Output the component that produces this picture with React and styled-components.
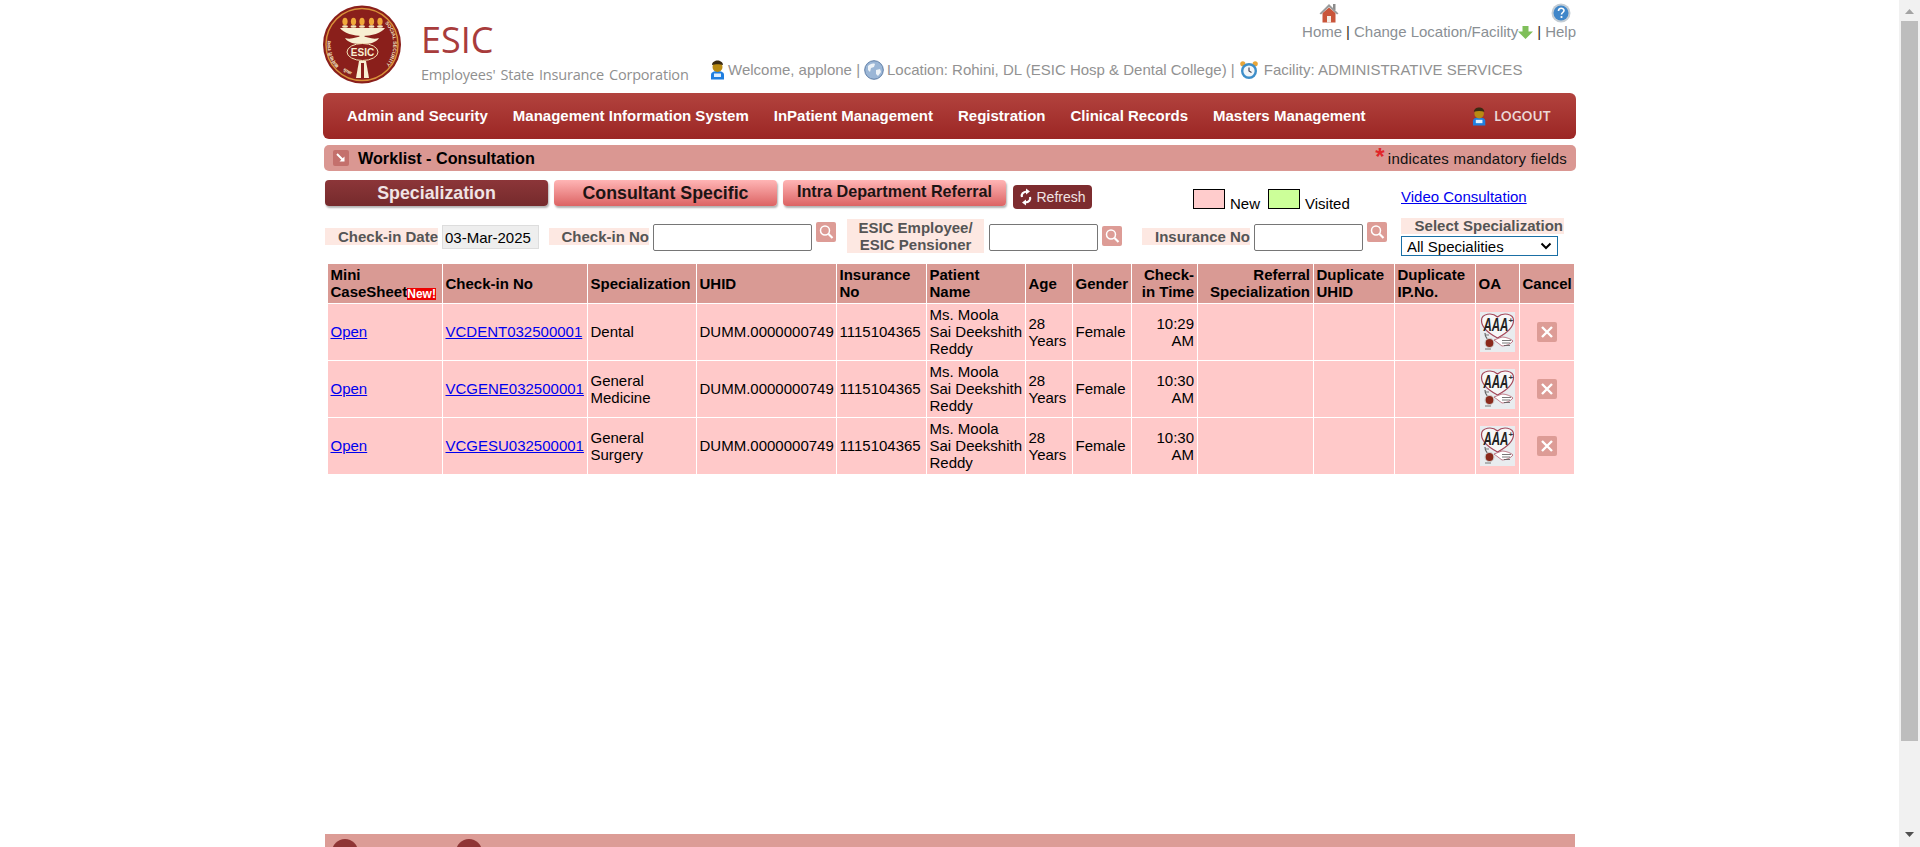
import React from 'react';
import styled, { createGlobalStyle } from 'styled-components';

const GlobalStyle = createGlobalStyle`
  html, body { margin: 0; padding: 0; height: 100%; overflow: hidden; background: #fff; }
  body { font-family: "Liberation Sans", Arial, sans-serif; font-size: 15px; color: #000; }
`;

const rows = [
  { no: 'VCDENT032500001', spec: 'Dental', time: '10:29 AM' },
  { no: 'VCGENE032500001', spec: 'General Medicine', time: '10:30 AM' },
  { no: 'VCGESU032500001', spec: 'General Surgery', time: '10:30 AM' },
];
const colWidths = [114, 144, 108, 139, 89, 98, 46, 58, 65, 115, 80, 80, 43, 54];
const menuItems = ['Admin and Security', 'Management Information System', 'InPatient Management', 'Registration', 'Clinical Records', 'Masters Management'];

const UserIcon = ({ size = 20 }) => (
  <svg width={size * 0.75} height={size} viewBox="0 0 15 20">
    <path d="M1 15c0-3 3-4 6.5-4s6.500 1 6.500 4v4.500H1z" fill="#1f7fe0" />
    <rect x="4" y="13.500" width="7" height="3.500" fill="#dff0ff" />
    <ellipse cx="7.500" cy="7" rx="5" ry="5" fill="#b98a12" />
    <path d="M2 5c0-3 3-4.500 5.500-4.500S13 2 13 5c-3-1-8-1-11 0z" fill="#3a2a12" />
  </svg>
);

const GlobeIcon = () => (
  <svg width="20" height="20" viewBox="0 0 20 20">
    <circle cx="10" cy="10" r="9.300" fill="#9bb6d6" stroke="#5f7ea6" strokeWidth="1" />
    <path d="M4 6c2-2 5-3 7-2l-1 3-3 1-1 4-2-2zM12 10l4-1 1 3-3 4-2-2z" fill="#eef3f8" />
  </svg>
);

const ClockIcon = () => (
  <svg width="20" height="20" viewBox="0 0 20 20">
    <circle cx="3.800" cy="3.800" r="2.600" fill="#e8a63a" />
    <circle cx="16.200" cy="3.800" r="2.600" fill="#e8a63a" />
    <circle cx="10" cy="11" r="8" fill="#3d8ec9" />
    <circle cx="10" cy="11" r="5.600" fill="#f2f6f9" />
    <path d="M10 7.500V11l2.500 1.500" stroke="#445" strokeWidth="1.200" fill="none" />
  </svg>
);

const HomeIcon = () => (
  <svg width="20" height="20" viewBox="0 0 20 20">
    <rect x="14" y="1" width="2.500" height="6" fill="#8b8b8b" />
    <path d="M3.500 10L10 4.500 16.500 10V19.500H3.500z" fill="#c9553a" />
    <path d="M0.500 10.500L10 1l9.500 9.500-1.500 1L10 4 2 11.500z" fill="#9a9a9a" />
    <rect x="8" y="13" width="4" height="6.500" fill="#f4ece4" />
  </svg>
);

const HelpIcon = () => (
  <svg width="20" height="20" viewBox="0 0 20 20">
    <circle cx="10" cy="10" r="9.500" fill="#c3ccd4" />
    <circle cx="10" cy="10" r="7.500" fill="#3f86c9" />
    <path d="M7.500 8c0-3.500 5.500-3.500 5.500-.5 0 2-2.500 2-2.500 4" fill="none" stroke="#fff" strokeWidth="1.600" />
    <circle cx="10.500" cy="14" r="1.100" fill="#fff" />
  </svg>
);

const GreenArrow = () => (
  <svg width="15" height="13" viewBox="0 0 15 13">
    <path d="M4.500 0h6v5.500H15L7.500 13 0 5.500h4.500z" fill="#7fbf5a" />
  </svg>
);

const SearchIcon = () => (
  <svg width="20" height="20" viewBox="0 0 20 20">
    <rect width="20" height="20" rx="2" fill="#dd9c96" />
    <circle cx="9" cy="8.500" r="4.500" fill="none" stroke="#fff" strokeWidth="1.500" />
    <path d="M12.500 12l4 4" stroke="#fff" strokeWidth="2.200" />
  </svg>
);

const CancelIcon = () => (
  <svg width="20" height="20" viewBox="0 0 20 20">
    <rect width="20" height="20" rx="2" fill="#dd9c96" />
    <path d="M5 5l10 10M15 5L5 15" stroke="#fff" strokeWidth="2.400" />
  </svg>
);

const ArrowBoxIcon = () => (
  <svg width="16" height="16" viewBox="0 0 16 16">
    <rect width="16" height="16" rx="2" fill="#c4706c" />
    <path d="M4 4l6 6" stroke="#fff" strokeWidth="2" />
    <path d="M11.500 6.500v5h-5z" fill="#fff" />
  </svg>
);

const RefreshIcon = () => (
  <svg width="14" height="18" viewBox="0 0 14 18">
    <path d="M3 9C2 6 4 4 8 3.500" fill="none" stroke="#fff" strokeWidth="2.200" />
    <path d="M7 .500l4 3-4 3z" fill="#fff" />
    <path d="M11 9c1 3-1 5-5 5.500" fill="none" stroke="#fff" strokeWidth="2.200" />
    <path d="M7 11.500l-4 3 4 3z" fill="#fff" />
  </svg>
);

const Chevron = () => (
  <SelectArrow width="12" height="8" viewBox="0 0 12 8">
    <path d="M1.500 1.500L6 6l4.500-4.500" fill="none" stroke="#000" strokeWidth="2" />
  </SelectArrow>
);

const Emblem = () => (
  <svg width="78" height="79" viewBox="0 0 78 79">
    <defs>
      <path id="arcLeft" d="M16 61A32 32 0 0 1 16 18" />
      <path id="arcRight" d="M62 18A32 32 0 0 1 62 61" />
      <path id="arcBottom" d="M20 65A32 32 0 0 0 33 71" />
    </defs>
    <circle cx="39" cy="39.500" r="39" fill="#8a1f1b" />
    <circle cx="39" cy="39.500" r="36" fill="none" stroke="#d9913a" strokeWidth="1.500" />
    {[22, 30.500, 39, 48.500, 57].map((x) => (
      <g key={x}>
        <ellipse cx={x} cy="16.500" rx="2.600" ry="3.800" fill="#f0a93a" />
        <ellipse cx={x} cy="21.500" rx="3" ry="1.300" fill="#f4e6b8" />
      </g>
    ))}
    <path d="M17 23h45c-3 5-14 8-22.500 8S20 28 17 23z" fill="#f8efd2" />
    <rect x="36.500" y="29" width="5" height="6" fill="#f8efd2" />
    <path d="M22 33c6 2 12-1 17-2 5 1 11 4 17 2-3 5-10 6-17 6s-14-1-17-6z" fill="#f8efd2" />
    <ellipse cx="39.500" cy="47" rx="15.500" ry="8.500" fill="#8a1f1b" stroke="#f4e6b8" strokeWidth="1" />
    <StampText x="39.500" y="51" textAnchor="middle">ESIC</StampText>
    <path d="M36 56l-3 17h13l-3-17z" fill="#f8efd2" />
    <path d="M38 58h3v15h-3z" fill="#8a1f1b" />
    <RingText><textPath href="#arcLeft">कर्मचारी राज्य</textPath></RingText>
    <RingText><textPath href="#arcRight">SOCIAL SECURITY</textPath></RingText>
    <RingText $small><textPath href="#arcBottom">सुरक्षा</textPath></RingText>
  </svg>
);

const OaIcon = () => (
  <svg width="35" height="40" viewBox="0 0 35 40">
    <rect width="35" height="40" fill="#e9ecef" />
    <path d="M17.500 26C8 21 1.500 15 1.500 8.500c0-7 10.500-8.500 16-3.500C23 0 33.500 1.500 33.500 8.500c0 6.500-6.500 12.500-16 17.500z" fill="#f7f7f7" stroke="#a5485a" strokeWidth="1.200" />
    <OaText transform="translate(3.500 19) scale(1 1.600)">AAA</OaText>
    <OaPlus x="28.500" y="11">+</OaPlus>
    <path d="M5 21c0 5 3 7 7 8" fill="none" stroke="#666" strokeWidth="1.200" />
    <path d="M14 28l8-3c4 0 9 2 11 4-2 3-7 5-11 5z" fill="#fff" stroke="#a5485a" strokeWidth="0.700" />
    <circle cx="9.500" cy="31" r="4.500" fill="#8a2a1c" stroke="#cfcfcf" strokeWidth="1.200" />
    <path d="M22 28.500h9M22 31h8M24 33.500h6" stroke="#555" strokeWidth="0.800" />
    <path d="M6 23h3M5 37h6" stroke="#777" strokeWidth="1.200" />
  </svg>
);

const App = () => (
  <>
    <GlobalStyle />
    <Viewport>
      <Page>
        <Header>
          <LogoLink><Emblem /></LogoLink>
          <Brand>
            <BrandName>ESIC</BrandName>
            <BrandSub>Employees' State Insurance Corporation</BrandSub>
          </Brand>
          <HeaderInfo>
            <TopLinks>
              <TopItem $shift>
                <HomeIcon />
                <span>Home</span>
              </TopItem>
              <Sep>|</Sep>
              <TopItem>
                <span>Change Location/Facility<GreenArrow /></span>
              </TopItem>
              <Sep>|</Sep>
              <TopItem>
                <HelpIcon />
                <span>Help</span>
              </TopItem>
            </TopLinks>
            <Welcome>
              <UserIcon /> <span>Welcome, applone |</span>
              <GlobeIcon /> <span>Location: Rohini, DL (ESIC Hosp &amp; Dental College) |</span>
              <ClockIcon /> <FacilityText>Facility: ADMINISTRATIVE SERVICES</FacilityText>
            </Welcome>
          </HeaderInfo>
        </Header>

        <MenuBar>
          <MenuList>
            {menuItems.map((item) => <MenuItem key={item}>{item}</MenuItem>)}
          </MenuList>
          <Logout><UserIcon size={19} /><span>LOGOUT</span></Logout>
        </MenuBar>

        <TitleBar>
          <TitleLeft><ArrowBoxIcon /><Title>Worklist - Consultation</Title></TitleLeft>
          <Mandatory><Star>*</Star>indicates mandatory fields</Mandatory>
        </TitleBar>

        <TabRow>
          <Tab $active>Specialization</Tab>
          <Tab>Consultant Specific</Tab>
          <Tab $small>Intra Department Referral</Tab>
          <RefreshButton><RefreshIcon />Refresh</RefreshButton>
          <Legend>
            <Swatch $color="#ffcccc" /><LegendText>New</LegendText>
            <Swatch $color="#ccff99" /><LegendText>Visited</LegendText>
          </Legend>
          <VideoLink href="#">Video Consultation</VideoLink>
        </TabRow>

        <FilterRow>
          <FieldLabel $width={113}>Check-in Date</FieldLabel>
          <DateBox readOnly value="03-Mar-2025" />
          <FieldLabel $width={100} $left={10}>Check-in No</FieldLabel>
          <TextBox $width={159} />
          <SearchButton $lift={10}><SearchIcon /></SearchButton>
          <FieldLabel $width={137} $left={11} $gap={5} $center>ESIC Employee/<br />ESIC Pensioner</FieldLabel>
          <TextBox $width={109} />
          <SearchButton $lift={3}><SearchIcon /></SearchButton>
          <FieldLabel $width={108} $left={20}>Insurance No</FieldLabel>
          <TextBox $width={109} />
          <SearchButton $lift={10}><SearchIcon /></SearchButton>
          <SelectGroup>
            <SelectLabel>Select Specialization</SelectLabel>
            <SelectWrap>
              <SpecSelect defaultValue="all">
                <option value="all">All Specialities</option>
              </SpecSelect>
              <Chevron />
            </SelectWrap>
          </SelectGroup>
        </FilterRow>

        <TableArea>
          <WorkTable>
            <colgroup>
              {colWidths.map((w, i) => <col key={i} style={{ width: w }} />)}
            </colgroup>
            <thead>
              <tr>
                <Th>Mini<br /><NoWrap>CaseSheet<NewBadge>New!</NewBadge></NoWrap></Th>
                <Th>Check-in No</Th>
                <Th>Specialization</Th>
                <Th>UHID</Th>
                <Th>Insurance No</Th>
                <Th>Patient<br />Name</Th>
                <Th>Age</Th>
                <Th>Gender</Th>
                <Th $right>Check-in Time</Th>
                <Th $right>Referral Specialization</Th>
                <Th>Duplicate UHID</Th>
                <Th>Duplicate IP.No.</Th>
                <Th>OA</Th>
                <Th>Cancel</Th>
              </tr>
            </thead>
            <tbody>
              {rows.map((r) => (
                <tr key={r.no}>
                  <Td><a href="#">Open</a></Td>
                  <Td><a href="#">{r.no}</a></Td>
                  <Td>{r.spec}</Td>
                  <Td>DUMM.0000000749</Td>
                  <Td>1115104365</Td>
                  <Td><NoWrap>Ms. Moola<br />Sai Deekshith<br />Reddy</NoWrap></Td>
                  <Td>28 Years</Td>
                  <Td>Female</Td>
                  <Td $right>{r.time}</Td>
                  <Td />
                  <Td />
                  <Td />
                  <Td $center><OaIcon /></Td>
                  <Td $center><CancelIcon /></Td>
                </tr>
              ))}
            </tbody>
          </WorkTable>
        </TableArea>

        <Footer>
          <FooterDot />
          <FooterDot />
        </Footer>
      </Page>

      <ScrollBar>
        <ScrollArrow viewBox="0 0 9 5" width="9" height="5"><path d="M4.500 0L9 5H0z" fill="#a3a3a3" /></ScrollArrow>
        <ScrollThumb />
        <ScrollArrow viewBox="0 0 9 5" width="9" height="5"><path d="M0 0h9L4.500 5z" fill="#505050" /></ScrollArrow>
      </ScrollBar>
    </Viewport>
  </>
);

const Viewport = styled.div`
  display: flex;
  height: 847px;
  overflow: hidden;
`;

const Page = styled.div`
  width: 1254px;
  height: 847px;
  margin: 0 322px 0 323px;
  display: flex;
  flex-direction: column;
`;

const Header = styled.header`
  display: flex;
  height: 93px;
  flex: none;
`;

const LogoLink = styled.div`
  width: 78px;
  padding-top: 5px;
`;

const StampText = styled.text`
  font-family: "Liberation Sans", Arial, sans-serif;
  font-size: 10px;
  font-weight: 700;
  fill: #f8efd2;
`;

const RingText = styled.text`
  font-family: "Liberation Sans", "Noto Sans", sans-serif;
  font-size: ${(p) => (p.$small ? '4px' : '5px')};
  font-weight: 700;
  fill: #f0e2c0;
`;

const Brand = styled.div`
  margin-left: 20px;
  width: 267px;
`;

const BrandName = styled.div`
  font-family: "Open Sans", sans-serif;
  font-size: 36px;
  font-weight: 400;
  line-height: 40px;
  margin-top: 20px;
  color: #a83c3c;
`;

const BrandSub = styled.div`
  font-family: "Open Sans", sans-serif;
  font-size: 14.500px;
  line-height: 20px;
  margin-top: 5px;
  color: #8f8f8f;
  white-space: nowrap;
  word-spacing: 1.500px;
  letter-spacing: -0.200px;
`;

const HeaderInfo = styled.div`
  flex: 1;
  margin-left: 22px;
  color: #929292;
  font-size: 15px;
`;

const TopLinks = styled.div`
  display: flex;
  justify-content: flex-end;
  align-items: flex-end;
  gap: 4px;
  height: 40px;
  margin-right: 1px;
  padding-top: 3px;
  box-sizing: border-box;
  line-height: 17px;
  color: #8a8f94;
`;

const TopItem = styled.div`
  display: flex;
  flex-direction: column;
  align-items: center;
  svg { display: block; ${(p) => (p.$shift ? 'margin-left: 14px;' : '')} }
  span svg { display: inline-block; vertical-align: -2px; }
`;

const Sep = styled.span`
  color: #33302a;
`;

const Welcome = styled.div`
  display: flex;
  align-items: center;
  gap: 3px;
  margin-top: 20px;
  height: 20px;
  white-space: nowrap;
  span { margin: 0 1px 2px 0; }
`;

const FacilityText = styled.span`
  && { margin-left: 2px; }
`;

const MenuBar = styled.nav`
  flex: none;
  height: 46px;
  margin-right: 1px;
  border-radius: 6px;
  background: linear-gradient(#b2433e, #9b2624);
  display: flex;
  align-items: center;
  justify-content: space-between;
  padding: 0 24px;
`;

const MenuList = styled.div`
  display: flex;
  gap: 25px;
  padding-bottom: 2px;
`;

const MenuItem = styled.a`
  color: #fff;
  font-weight: 700;
  font-size: 15px;
  white-space: nowrap;
`;

const Logout = styled.div`
  display: flex;
  align-items: center;
  gap: 8px;
  padding-right: 1px;
  font-family: "Lato", sans-serif;
  font-size: 13px;
  font-weight: 700;
  letter-spacing: 0.400px;
  color: #ecd8d6;
`;

const TitleBar = styled.div`
  flex: none;
  height: 26px;
  margin: 6px 1px 0 1px;
  padding: 0 9px;
  border-radius: 5px;
  background: #da9792;
  display: flex;
  align-items: center;
  justify-content: space-between;
`;

const TitleLeft = styled.div`
  display: flex;
  align-items: center;
  gap: 9px;
`;

const Title = styled.span`
  font-weight: 700;
  font-size: 16.200px;
`;

const Mandatory = styled.span`
  font-size: 15px;
  letter-spacing: 0.220px;
  color: #111;
  white-space: nowrap;
`;

const Star = styled.span`
  color: #e0262a;
  font-size: 24px;
  font-weight: 700;
  line-height: 10px;
  margin-right: 3px;
  vertical-align: -1px;
`;

const TabRow = styled.div`
  flex: none;
  height: 29px;
  margin: 9px 0 0 2px;
  display: flex;
  align-items: flex-start;
`;

const Tab = styled.div`
  width: 223px;
  height: 26px;
  margin-right: 6px;
  border-radius: 4px;
  display: flex;
  align-items: center;
  justify-content: center;
  font-weight: 700;
  font-size: ${(p) => (p.$small ? '16.200px' : '17.800px')};
  padding-bottom: ${(p) => (p.$small ? '3px' : '0')};
  box-sizing: border-box;
  color: ${(p) => (p.$active ? '#f0e4e4' : '#1c1414')};
  background: ${(p) => (p.$active ? 'linear-gradient(#8c3639, #752a2c)' : 'linear-gradient(#ffb5b5, #dc6363)')};
  box-shadow: 1px 2px 2px rgba(0, 0, 0, 0.3);
  white-space: nowrap;
`;

const RefreshButton = styled.div`
  width: 79px;
  height: 24px;
  margin: 5px 0 0 1px;
  border-radius: 4px;
  background: #7d2c2f;
  color: #f0e4e4;
  font-size: 14px;
  display: flex;
  align-items: center;
  justify-content: center;
  gap: 3px;
`;

const Legend = styled.div`
  display: flex;
  align-items: flex-end;
  margin: 9px 0 0 101px;
  width: 208px;
`;

const Swatch = styled.span`
  width: 32px;
  height: 20px;
  box-sizing: border-box;
  border: 1px solid #000;
  background: ${(p) => p.$color};
`;

const LegendText = styled.span`
  font-size: 15px;
  line-height: 17px;
  margin: 0 8px 0 5px;
  position: relative;
  top: 3px;
`;

const VideoLink = styled.a`
  font-size: 15px;
  line-height: 17px;
  margin-top: 8px;
  color: #0000ee;
  white-space: nowrap;
`;

const FilterRow = styled.div`
  flex: none;
  height: 38px;
  margin: 9px 0 0 2px;
  display: flex;
  align-items: center;
`;

const FieldLabel = styled.div`
  width: ${(p) => p.$width}px;
  margin: 0 ${(p) => p.$gap || 4}px 2px ${(p) => p.$left || 0}px;
  background: #fde8e2;
  color: #555;
  font-weight: 700;
  font-size: 15px;
  line-height: 17px;
  text-align: ${(p) => (p.$center ? 'center' : 'right')};
  white-space: nowrap;
  box-sizing: border-box;
`;

const DateBox = styled.input`
  width: 97px;
  height: 24px;
  box-sizing: border-box;
  margin: 0;
  padding: 0 2px;
  border: 1px solid #ddd;
  background: #eee;
  font: 15px "Liberation Sans", Arial, sans-serif;
`;

const TextBox = styled.input`
  width: ${(p) => p.$width}px;
  height: 27px;
  box-sizing: border-box;
  margin: 0;
  padding: 0 2px;
  border: 1px solid #767676;
  border-radius: 2px;
  background: #fff;
`;

const SearchButton = styled.span`
  width: 20px;
  height: 20px;
  margin: 0 0 ${(p) => p.$lift}px 4px;
  svg { display: block; }
`;

const SelectGroup = styled.div`
  margin-left: 14px;
  width: 163px;
`;

const SelectLabel = styled.div`
  background: #fde8e2;
  color: #555;
  font-weight: 700;
  font-size: 15px;
  line-height: 16px;
  text-align: right;
  padding-right: 1px;
  margin-bottom: 2px;
  white-space: nowrap;
`;

const SelectWrap = styled.div`
  position: relative;
  width: 157px;
`;

const SpecSelect = styled.select`
  display: block;
  appearance: none;
  width: 157px;
  height: 20px;
  box-sizing: border-box;
  border: 1px solid #1a6fa5;
  border-radius: 0;
  background: #fff;
  color: #000;
  padding: 0 0 0 5px;
  font: 15px "Liberation Sans", Arial, sans-serif;
`;

const SelectArrow = styled.svg`
  position: absolute;
  right: 6px;
  top: 6px;
  pointer-events: none;
`;

const TableArea = styled.div`
  flex: 1;
  min-height: 0;
  margin: 7px 0 0 4px;
`;

const WorkTable = styled.table`
  table-layout: fixed;
  width: 1248px;
  border-collapse: separate;
  border-spacing: 1px;
  font-size: 15px;
  line-height: 17px;
  a { color: #0000ee; }
`;

const Th = styled.th`
  height: 39px;
  padding: 0 3px 1px 2.500px;
  box-sizing: border-box;
  background: #d99a94;
  font-weight: 700;
  vertical-align: middle;
  text-align: ${(p) => (p.$right ? 'right' : 'left')};
`;

const NoWrap = styled.span`
  white-space: nowrap;
`;

const NewBadge = styled.span`
  display: inline-block;
  background: #ee0000;
  color: #fff;
  font-size: 12px;
  line-height: 12px;
  height: 12px;
  vertical-align: -1px;
  white-space: nowrap;
`;

const Td = styled.td`
  height: 56px;
  padding: 0 3px 1px 2.500px;
  box-sizing: border-box;
  background: #ffc9c9;
  vertical-align: middle;
  text-align: ${(p) => (p.$right ? 'right' : p.$center ? 'center' : 'left')};
  svg { display: inline-block; vertical-align: middle; }
`;

const OaText = styled.text`
  font-family: "Liberation Sans", Arial, sans-serif;
  font-size: 11.500px;
  font-style: italic;
  font-weight: 700;
  fill: #222;
`;

const OaPlus = styled.text`
  font-family: "Liberation Sans", Arial, sans-serif;
  font-size: 8px;
  font-weight: 700;
  fill: #333;
`;

const Footer = styled.footer`
  flex: none;
  height: 13px;
  margin-left: 2px;
  width: 1250px;
  background: #dc9c96;
  overflow: hidden;
  display: flex;
  gap: 98px;
  padding: 5px 0 0 7px;
  box-sizing: border-box;
`;

const FooterDot = styled.span`
  width: 26px;
  height: 26px;
  border-radius: 50%;
  background: #8f3535;
  flex: none;
`;

const ScrollBar = styled.div`
  width: 21px;
  flex: none;
  height: 847px;
  background: #f1f1f1;
  display: flex;
  flex-direction: column;
  align-items: center;
  padding-top: 9px;
  box-sizing: border-box;
`;

const ScrollArrow = styled.svg`
  flex: none;
`;

const ScrollThumb = styled.div`
  width: 17px;
  height: 720px;
  margin: 7px 0 91px;
  background: #bdbdbd;
  flex: none;
`;

export default App;
